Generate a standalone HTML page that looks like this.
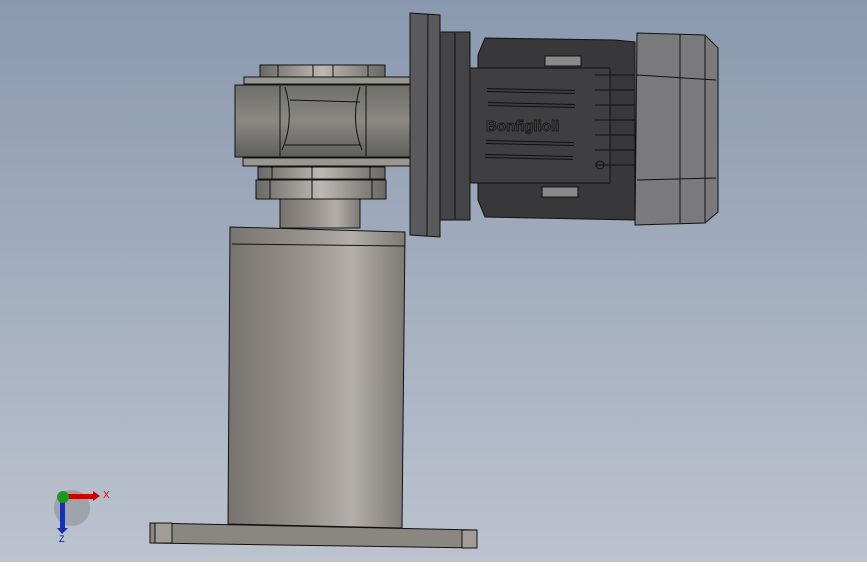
<!DOCTYPE html><html><head><style>html,body{margin:0;padding:0}body{width:867px;height:562px;overflow:hidden}</style></head><body>
<svg width="867" height="562" viewBox="0 0 867 562" xmlns="http://www.w3.org/2000/svg" font-family="Liberation Sans, sans-serif">
<defs>
<linearGradient id="bg" x1="0" y1="0" x2="0" y2="1"><stop offset="0" stop-color="#8a99af"/><stop offset="1" stop-color="#bcc3cf"/></linearGradient>
<linearGradient id="cyl" x1="0" y1="0" x2="1" y2="0"><stop offset="0" stop-color="#77736e"/><stop offset="0.4" stop-color="#958f89"/><stop offset="0.7" stop-color="#b3aea9"/><stop offset="1" stop-color="#7d7974"/></linearGradient>
<linearGradient id="gb" x1="0" y1="0" x2="0" y2="1"><stop offset="0" stop-color="#6e6e6a"/><stop offset="0.5" stop-color="#8a8984"/><stop offset="1" stop-color="#5e5e5b"/></linearGradient>
<linearGradient id="ring" x1="0" y1="0" x2="1" y2="0"><stop offset="0" stop-color="#6a6864"/><stop offset="0.5" stop-color="#bdb8b2"/><stop offset="1" stop-color="#6a6864"/></linearGradient>
</defs>
<rect width="867" height="562" fill="url(#bg)"/>
<g stroke="#111" stroke-width="1">
<path d="M150 523 L477 530 L477 548 L150 543 Z" fill="#8a8781"/>
<rect x="155" y="523" width="17" height="20" fill="#a19c96"/>
<rect x="462" y="530" width="15" height="18" fill="#a19c96"/>
<path d="M230 227 L405 232 L402 528 L228 524 Z" fill="url(#cyl)"/>
<line x1="232" y1="244" x2="405" y2="246"/>
<rect x="280" y="196" width="80" height="32" fill="url(#cyl)"/>
<rect x="256" y="180" width="130" height="19" fill="url(#ring)"/>
<path d="M270 180 V199 M312 180 V199 M372 180 V199"/>
<rect x="258" y="167" width="127" height="12" fill="url(#ring)"/>
<path d="M272 167 V179 M312 167 V179 M370 167 V179"/>
<rect x="243" y="158" width="167" height="8" fill="#9a9690"/>
<rect x="260" y="65" width="125" height="12" fill="url(#ring)"/>
<path d="M278 65 V77 M313 65 V77 M333 65 V77 M368 65 V77"/>
<rect x="244" y="77" width="167" height="7" fill="#9a9690"/>
<rect x="235" y="85" width="175" height="72" fill="url(#gb)"/>
<line x1="280" y1="86" x2="280" y2="156"/><line x1="366" y1="86" x2="366" y2="156"/>
<path d="M285 87 Q295 120 282 150 M360 87 Q350 120 362 150" fill="none"/>
<line x1="290" y1="100" x2="360" y2="102"/><line x1="285" y1="145" x2="360" y2="145"/>
<path d="M410 13 L440 15 L440 237 L410 235 Z" fill="#5a5a5c"/>
<line x1="428" y1="14" x2="427" y2="236"/>
<rect x="440" y="32" width="30" height="188" fill="#444446"/>
<line x1="455" y1="33" x2="455" y2="219"/>
<path d="M485 38 L615 40 L635 42 L635 220 L485 217 L478 200 L478 55 Z" fill="#38383a"/>
<rect x="470" y="68" width="140" height="115" fill="#3f3f41"/>
<path d="M487 90 L575 92 M488 104 L575 106 M486 142 L574 144 M485 156 L573 158" stroke="#111" stroke-width="4"/>
<path d="M487 90 L575 92 M488 104 L575 106 M486 142 L574 144 M485 156 L573 158" stroke="#3d3d3f" stroke-width="2"/>
<text x="486" y="131" font-size="15" font-weight="bold" fill="#3f3f41" stroke="#111" stroke-width="0.7">Bonfiglioli</text>
<rect x="545" y="56" width="36" height="10" fill="#8a8a8a"/>
<rect x="542" y="187" width="36" height="10" fill="#8a8a8a"/>
<path d="M595 75 L635 75 M595 90 L635 90 M595 105 L635 105 M595 120 L635 120 M595 135 L635 135 M595 150 L635 150 M595 165 L635 165"/>
<circle cx="600" cy="165" r="4" fill="none"/>
<path d="M637 33 L705 35 L718 48 L718 212 L705 223 L635 225 Z" fill="#7a7a7c"/>
<path d="M680 34 L680 224 M637 75 L716 80 M637 180 L716 178 M705 36 L705 222"/>
</g>
<circle cx="72" cy="508" r="18" fill="#888" opacity="0.5"/>
<rect x="64" y="494" width="30" height="5" fill="#c00"/>
<path d="M93 491 L100 496 L93 501 Z" fill="#c00"/>
<text x="103" y="498" font-size="10" fill="#e00">X</text>
<rect x="60" y="498" width="5" height="30" fill="#1a2fb0"/>
<path d="M57 528 L68 528 L62 534 Z" fill="#1a2fb0"/>
<text x="59" y="542" font-size="9" fill="#00c">Z</text>
<circle cx="63" cy="497" r="6" fill="#1a9a1a"/>
</svg>
</body></html>
